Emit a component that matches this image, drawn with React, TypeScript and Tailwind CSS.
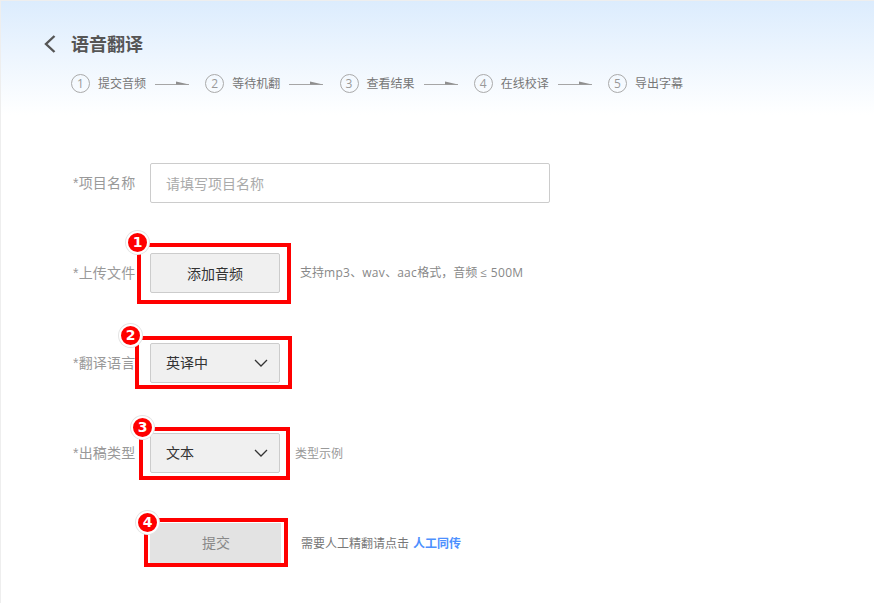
const font = { fontFamily: '"Open Sans", "Noto Sans CJK SC", sans-serif' };
const labelFont = { fontFamily: '"Liberation Sans", "Noto Sans CJK SC", sans-serif' };
const badgeFont = { fontFamily: '"DejaVu Sans", sans-serif' };

const steps = ["提交音频", "等待机翻", "查看结果", "在线校译", "导出字幕"];

function Arrow() {
  return (
    <svg width="34" height="8" viewBox="0 0 34 8" className="ml-[8px] shrink-0">
      <rect x="0" y="4" width="34" height="1" fill="#a6a6a6" />
      <polygon points="21,1.5 34,4.5 21,4.5" fill="#8f8f8f" />
    </svg>
  );
}

function Chevron() {
  return (
    <svg width="14" height="8" viewBox="0 0 14 8" fill="none" stroke="#333" strokeWidth="1.3">
      <path d="M1 1l6 6 6-6" />
    </svg>
  );
}

function Mark({ n, box, badge }: { n: number; box: string; badge: string }) {
  return (
    <>
      <div className={`absolute border-[4px] border-[#ff0000] ${box}`} />
      <div
        style={badgeFont}
        className={`absolute flex h-[23px] w-[23px] items-center justify-center rounded-full border-[2px] border-white bg-[#ff0000] text-[14px] font-bold text-white shadow-[0_0_0_1px_#e4e4e4] ${badge}`}
      >
        {n}
      </div>
    </>
  );
}

function Row({ label, children, mt }: { label?: string; children: React.ReactNode; mt: string }) {
  return (
    <div className={`flex h-10 items-center ${mt}`}>
      <div style={labelFont} className="w-[134px] pl-[72px] text-left text-[14px] tracking-[0.2px] whitespace-nowrap text-[#999]">
        {label}
      </div>
      <div className="ml-[15px] flex items-center">{children}</div>
    </div>
  );
}

function Select({ value }: { value: string }) {
  return (
    <div className="flex h-10 w-[130px] items-center justify-between rounded-[2px] border border-[#ccc] bg-[#f0f0f0] pr-[11px] pl-[15px] text-[14px] text-[#333]">
      <span className="-mt-[1px]">{value}</span>
      <Chevron />
    </div>
  );
}

export default function App() {
  return (
    <div className="relative h-[603px] w-[874px] overflow-hidden border-t border-l border-[#eeeeee] bg-white" style={font}>
      <div className="h-[114px] bg-gradient-to-b from-[#dcecfd] to-white pt-[32px] pl-[41px]">
        <div className="flex h-[22px] items-center">
          <svg width="16" height="20" viewBox="0 0 16 20" fill="none" stroke="#555" strokeWidth="2.4">
            <path d="M12.5 2L4 10l8.5 8" />
          </svg>
          <h1 className="ml-[13px] text-[18px] font-bold text-[#555]">语音翻译</h1>
        </div>
        <div className="mt-[19px] ml-[29px] flex h-[19px] items-center">
          {steps.map((s, i) => (
            <div key={s} className={`flex items-center ${i < 4 ? "w-[134.25px]" : ""}`}>
              <div className="flex h-[19px] w-[19px] items-center justify-center rounded-full border border-[#aaa] text-[12px] text-[#999]">
                {i + 1}
              </div>
              <span className="ml-[8px] w-[49px] text-[12px] whitespace-nowrap text-[#777]">{s}</span>
              {i < 4 && <Arrow />}
            </div>
          ))}
        </div>
      </div>

      <div>
        <Row label="*项目名称" mt="mt-[48px]">
          <div className="flex h-10 w-[400px] items-center rounded-[2px] border border-[#ccc] bg-white pl-[15px] text-[14px] text-[#aaa]">
            请填写项目名称
          </div>
        </Row>
        <Row label="*上传文件" mt="mt-[50px]">
          <div className="flex h-10 w-[130px] items-center justify-center rounded-[2px] border border-[#ccc] bg-[#f0f0f0] text-[14px] text-[#333]">
            添加音频
          </div>
          <span className="ml-[20px] text-[12px] text-[#888]">
            支持<span className="tracking-[0.3px]">mp3</span>、<span className="tracking-[0.3px]">wav</span>、
            <span className="tracking-[0.3px]">aac</span>格式，音频 <span className="tracking-[0.3px]">≤ 500M</span>
          </span>
        </Row>
        <Row label="*翻译语言" mt="mt-[50px]">
          <Select value="英译中" />
        </Row>
        <Row label="*出稿类型" mt="mt-[50px]">
          <Select value="文本" />
          <span className="mt-[1px] ml-[15px] text-[12px] text-[#999]">类型示例</span>
        </Row>
        <Row mt="mt-[50px]">
          <div className="flex h-10 w-[131px] items-center justify-center bg-[#e3e3e3] pb-[2px] pl-[1px] text-[14px] text-[#888]">提交</div>
          <span className="mt-[1px] ml-[20px] text-[12px] text-[#777]">需要人工精翻请点击</span>
          <a className="mt-[1px] ml-[4px] text-[12px] font-bold text-[#4d90fe]">人工同传</a>
        </Row>
      </div>

      <Mark n={1} box="left-[136px] top-[242px] h-[61px] w-[154px]" badge="left-[125px] top-[230px]" />
      <Mark n={2} box="left-[134px] top-[335px] h-[53px] w-[157px]" badge="left-[118px] top-[323px]" />
      <Mark n={3} box="left-[138px] top-[426px] h-[53px] w-[151px]" badge="left-[130px] top-[415px]" />
      <Mark n={4} box="left-[143px] top-[517px] h-[49px] w-[144px]" badge="left-[135px] top-[510px]" />
    </div>
  );
}
